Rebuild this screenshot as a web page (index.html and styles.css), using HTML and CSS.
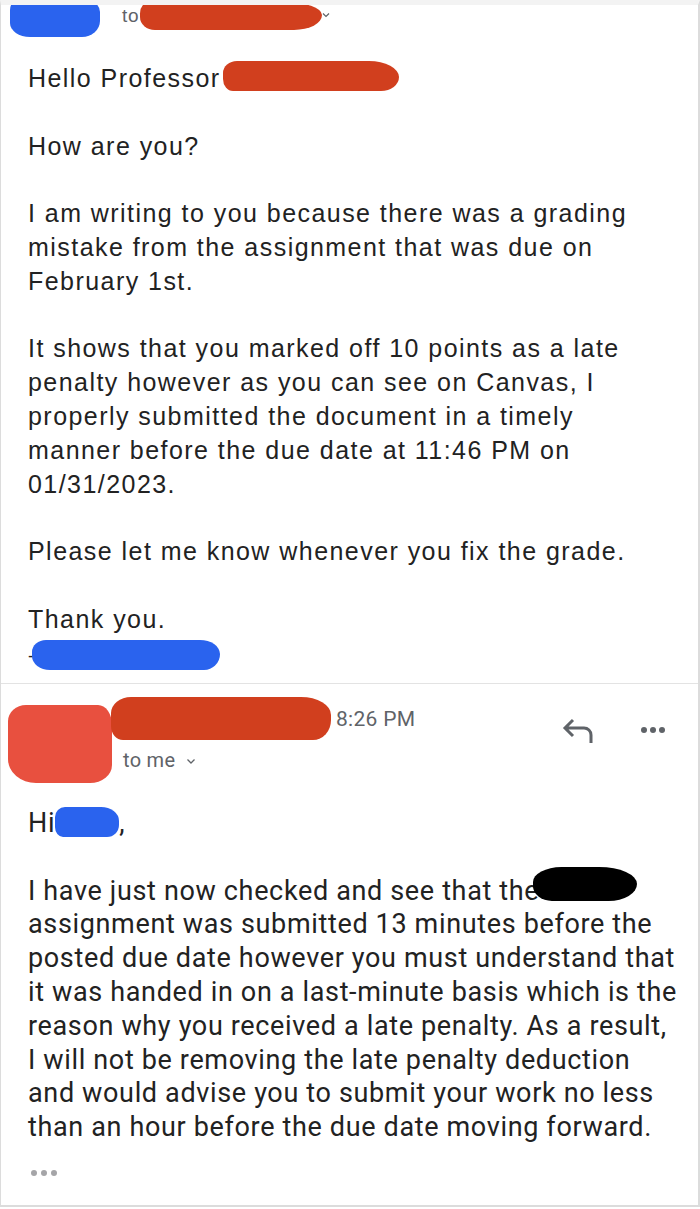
FILE: index.html
```html
<!DOCTYPE html>
<html>
<head>
<meta charset="utf-8">
<link rel="stylesheet" href="styles.css">
</head>
<body>
<div class="card">
  <section class="mail first">
    <div class="head1">
      <span class="mark blue-top"></span>
      <span class="to">to</span>
      <span class="mark red-top"></span>
      <svg class="chev" width="8" height="6" viewBox="0 0 8 6"><path d="M1 1.5 L4 4.5 L7 1.5" fill="none" stroke="#5f6368" stroke-width="1.2"/></svg>
    </div>
    <div class="body body1">
      <p>Hello Professor <span class="mark red-prof"></span></p>
      <p>How are you?</p>
      <p>I am writing to you because there was a grading<br>mistake from the assignment that was due on<br>February 1st.</p>
      <p>It shows that you marked off 10 points as a late<br>penalty however as you can see on Canvas, I<br>properly submitted the document in a timely<br>manner before the due date at 11:46 PM on<br>01/31/2023.</p>
      <p>Please let me know whenever you fix the grade.</p>
      <p class="last">Thank you.<br><span class="dash">-</span><span class="mark blue-sig"></span></p>
    </div>
  </section>
  <section class="mail second">
    <div class="head2">
      <span class="mark avatar"></span>
      <div class="who">
        <div class="who-row">
          <span class="mark red-name"></span>
          <span class="time">8:26 PM</span>
        </div>
        <div class="tome">to me <svg class="chev2" width="10" height="7" viewBox="0 0 10 7"><path d="M1.5 1.5 L5 5 L8.5 1.5" fill="none" stroke="#5f6368" stroke-width="1.3"/></svg></div>
      </div>
      <div class="actions">
        <svg class="reply" width="34" height="28" viewBox="0 0 34 28"><path d="M11 3 L3 11 L11 19 M3 11 H22 A7 7 0 0 1 29 18 V26" fill="none" stroke="#5f6368" stroke-width="3" stroke-linecap="butt" stroke-linejoin="miter"/></svg>
        <span class="dots"><i></i><i></i><i></i></span>
      </div>
    </div>
    <div class="body body2">
      <p>Hi<span class="mark blue-hi"></span>,</p>
      <p>I have just now checked and see that the<span class="mark black"></span><br>assignment was submitted 13 minutes before the<br>posted due date however you must understand that<br>it was handed in on a last-minute basis which is the<br>reason why you received a late penalty. As a result,<br>I will not be removing the late penalty deduction<br>and would advise you to submit your work no less<br>than an hour before the due date moving forward.</p>
      <div class="more"><i></i><i></i><i></i></div>
    </div>
  </section>
</div>
</body>
</html>
```
FILE: styles.css
```css
html, body {
  margin: 0;
  padding: 0;
  background: #fff;
}
body {
  width: 700px;
  height: 1209px;
  font-family: "Liberation Sans", Arial, Helvetica, sans-serif;
  color: #222;
  overflow: hidden;
}
.card {
  border-left: 1px solid #dcdcdc;
  border-right: 2px solid #dcdcdc;
  border-bottom: 2px solid #dcdcdc;
  border-top: 5px solid #f3f3f3;
  height: 1200px;
  box-sizing: content-box;
  overflow: hidden;
}
.mark {
  display: inline-block;
  vertical-align: middle;
}
.head1 {
  display: flex;
  align-items: flex-start;
  height: 32px;
  margin-top: -5px;
}
.blue-top {
  width: 90px;
  height: 37px;
  margin-left: 9px;
  background: #2a63ee;
  border-radius: 8px 14px 18px 20px / 10px 12px 16px 14px;
}
.to {
  margin-left: 22px;
  margin-top: 5px;
  font-size: 19px;
  letter-spacing: 0.8px;
  color: #5f6368;
}
.red-top {
  width: 182px;
  height: 28px;
  margin-left: 1px;
  margin-top: 2px;
  background: #d13f1e;
  border-radius: 10px 40px 30px 16px / 12px 14px 16px 14px;
}
.chev {
  margin-top: 12px;
}
.body {
  padding-left: 27px;
  font-size: 25px;
  letter-spacing: 1.45px;
  line-height: 33.8px;
}
.body p {
  margin: 0 0 33.8px 0;
  white-space: nowrap;
}
.body1 {
  padding-top: 30px;
}
.body1 p.last {
  margin-bottom: 0;
}
.red-prof {
  width: 176px;
  height: 30px;
  margin-left: -6px;
  margin-top: -8px;
  background: #d13f1e;
  border-radius: 14px 30px 18px 10px / 12px 16px 14px 12px;
}
.dash {
  display: inline-block;
  width: 8px;
  font-size: 18px;
}
.blue-sig {
  width: 188px;
  height: 30px;
  margin-left: -4px;
  background: #2a63ee;
  border-radius: 14px 20px 16px 18px / 12px 14px 16px 14px;
}
.mail.first {
  height: 683px;
  border-bottom: 1px solid #e3e3e3;
}
.head2 {
  display: flex;
  align-items: flex-start;
  height: 99px;
}
.avatar {
  width: 104px;
  height: 78px;
  margin-left: 7px;
  margin-top: 21px;
  background: #e8503f;
  border-radius: 18px 14px 22px 28px / 16px 20px 18px 24px;
}
.who {
  display: flex;
  flex-direction: column;
  margin-left: -1px;
}
.who-row {
  display: flex;
  align-items: center;
  margin-top: 13px;
}
.red-name {
  width: 220px;
  height: 43px;
  background: #d13f1e;
  border-radius: 20px 30px 18px 12px / 16px 18px 20px 14px;
}
.time {
  margin-left: 5px;
  font-family: Roboto, "Liberation Sans", sans-serif;
  font-size: 21px;
  letter-spacing: 0.3px;
  color: #5f6368;
}
.tome {
  margin-left: 12px;
  margin-top: 8px;
  font-family: Roboto, "Liberation Sans", sans-serif;
  font-size: 20px;
  letter-spacing: 0.3px;
  line-height: 24px;
  color: #5f6368;
}
.chev2 {
  margin-left: 5px;
  vertical-align: 2px;
}
.actions {
  margin-left: auto;
  margin-top: 33px;
  display: flex;
  align-items: center;
  margin-right: 33px;
}
.reply {
  display: block;
}
.dots {
  display: flex;
  gap: 3px;
  margin-left: 45px;
  margin-top: -2px;
}
.dots i {
  display: block;
  width: 6px;
  height: 6px;
  border-radius: 50%;
  background: #5f6368;
}
.body2 {
  padding-top: 24px;
  font-family: Roboto, "Liberation Sans", sans-serif;
  font-size: 27px;
  letter-spacing: 0.65px;
}
.blue-hi {
  width: 64px;
  height: 30px;
  margin-left: 0;
  margin-top: -6px;
  background: #2a63ee;
  border-radius: 10px 18px 12px 8px / 10px 14px 12px 10px;
}
.black {
  width: 104px;
  height: 34px;
  margin-left: -6px;
  margin-top: -16px;
  background: #000;
  border-radius: 30px 40px 30px 20px / 16px 18px 18px 16px;
}
.body2 p:last-of-type {
  margin-bottom: 0;
}
.more {
  display: flex;
  gap: 4px;
  margin-top: 25px;
  margin-left: 3px;
}
.more i {
  display: block;
  width: 6px;
  height: 6px;
  border-radius: 50%;
  background: #a5a5a8;
}
```
